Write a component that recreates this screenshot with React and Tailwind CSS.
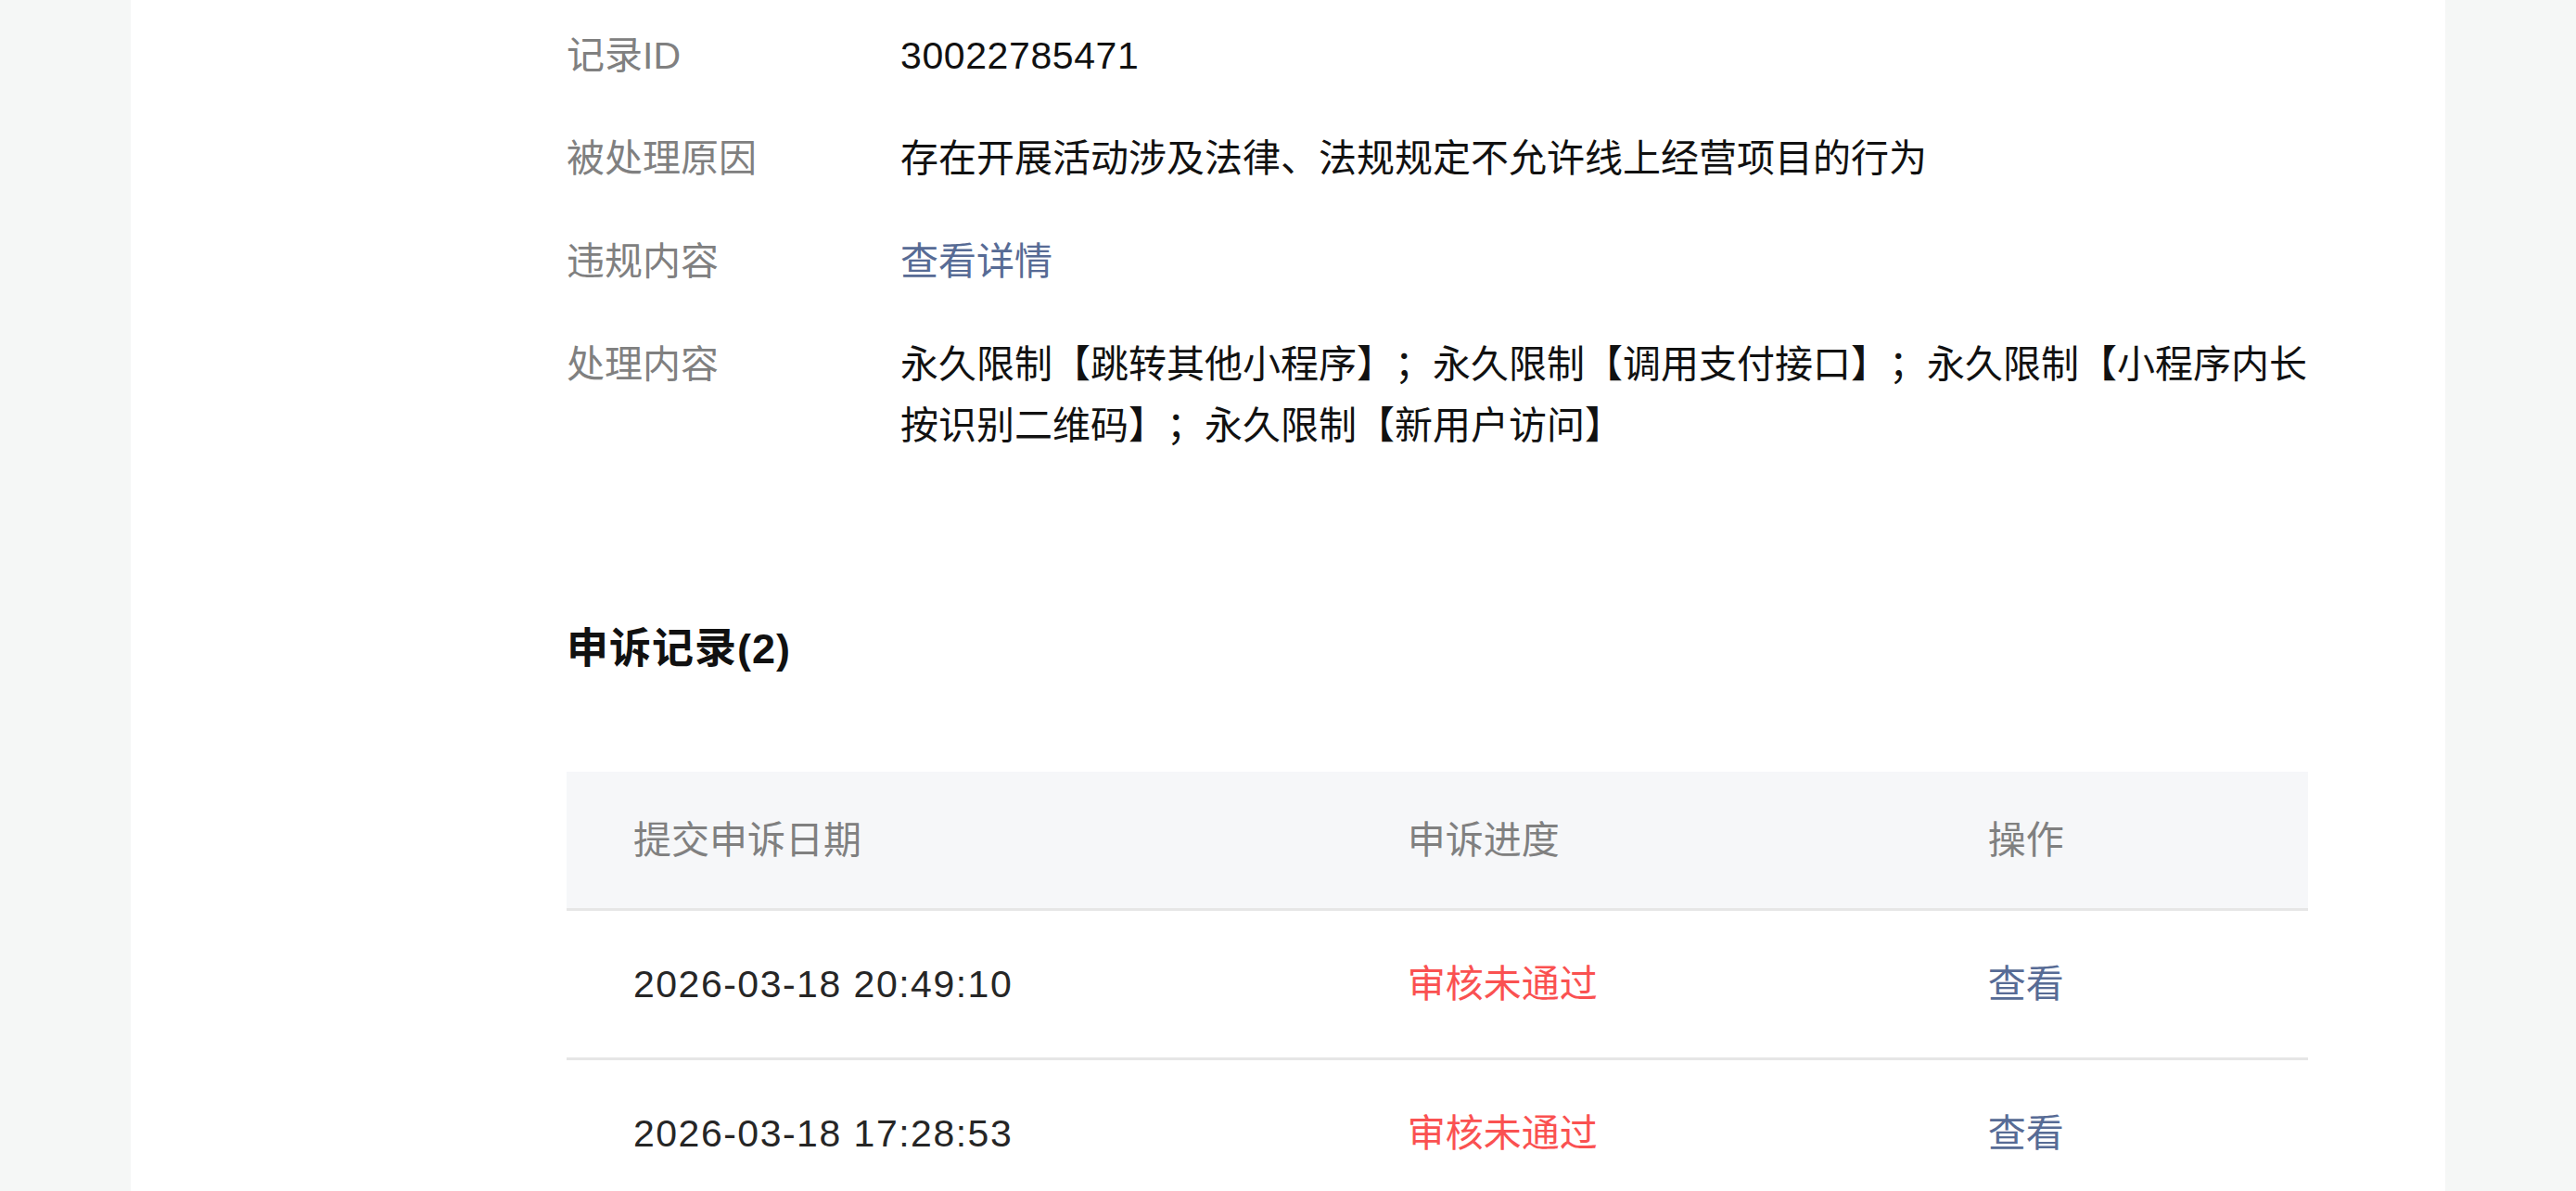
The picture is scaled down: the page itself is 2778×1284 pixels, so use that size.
const info = [
  { label: "记录ID", value: "30022785471", num: true },
  { label: "被处理原因", value: "存在开展活动涉及法律、法规规定不允许线上经营项目的行为" },
  { label: "违规内容", value: "查看详情", link: true },
  {
    label: "处理内容",
    value:
      "永久限制【跳转其他小程序】；永久限制【调用支付接口】；永久限制【小程序内长按识别二维码】；永久限制【新用户访问】",
  },
];

const appeals = [
  { date: "2026-03-18 20:49:10", status: "审核未通过" },
  { date: "2026-03-18 17:28:53", status: "审核未通过" },
];

export default function App() {
  return (
    <div className="h-screen overflow-hidden bg-[#f5f7f6] px-[141px] font-['Liberation_Sans','Noto_Sans_CJK_SC',sans-serif] text-[41px] leading-[66px] [text-spacing-trim:space-all]">
      <div className="h-full bg-white pl-[470px] pt-[27px]">
        <div className="w-[1878px]">
          {/* 记录详情 */}
          <div className="flex flex-col gap-[45px]">
            {info.map((row) => (
              <div key={row.label} className="flex">
                <div className="w-[360px] shrink-0 text-[#808080]">{row.label}</div>
                <div
                  className={`flex-1 ${row.link ? "text-[#576b95]" : "text-[#111111]"} ${
                    row.num ? "tracking-[0.6px]" : ""
                  }`}
                >
                  {row.value}
                </div>
              </div>
            ))}
          </div>

          {/* 申诉记录 */}
          <h2 className="mt-[175px] text-[45px] leading-[66px] font-bold tracking-[1px] text-[#111111]">
            申诉记录(2)
          </h2>

          <div className="mt-[99px]">
            <div className="grid h-[150px] grid-cols-[4fr_3fr_2fr] items-center border-b-[3px] border-[#e6e6e6] bg-[#f6f7f9] text-[#808080]">
              <div className="pl-[72px]">提交申诉日期</div>
              <div className="pl-[72px]">申诉进度</div>
              <div className="pl-[72px]">操作</div>
            </div>
            {appeals.map((a) => (
              <div
                key={a.date}
                className="grid h-[161px] grid-cols-[4fr_3fr_2fr] items-center border-b-[3px] border-[#e6e6e6]"
              >
                <div className="pl-[72px] tracking-[1.5px] text-[#262626]">{a.date}</div>
                <div className="pl-[72px] text-[#fa5151]">{a.status}</div>
                <div className="pl-[72px] text-[#576b95]">查看</div>
              </div>
            ))}
          </div>
        </div>
      </div>
    </div>
  );
}
